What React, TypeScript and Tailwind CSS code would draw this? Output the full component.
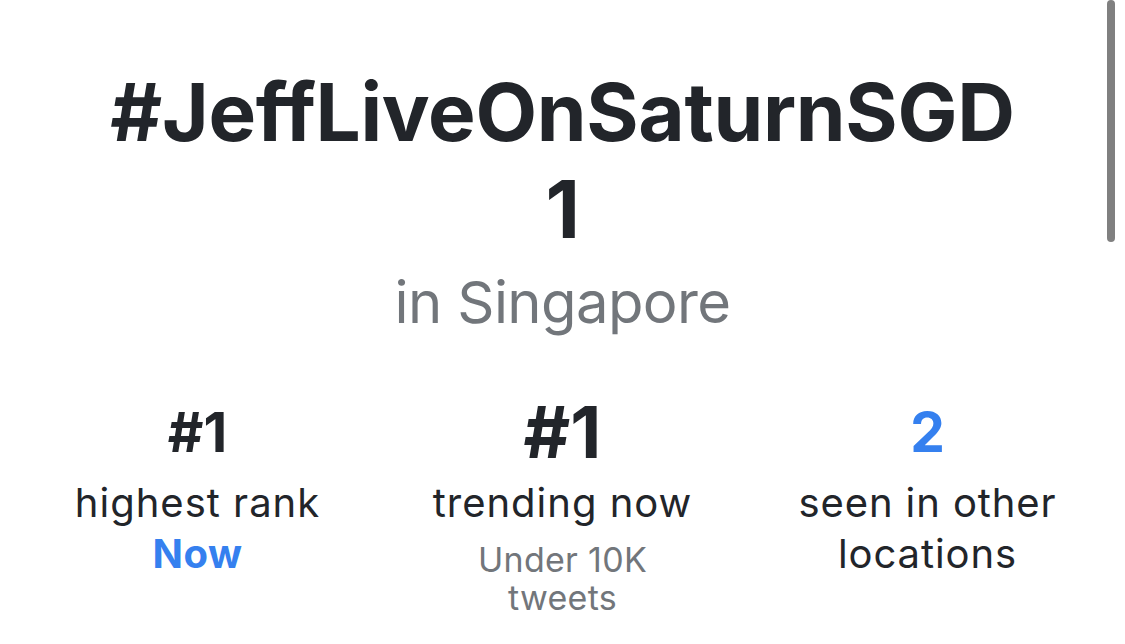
import React from "react";

export default function App() {
  return (
    <div
      className="relative w-[1125px] h-[644px] overflow-hidden bg-white text-[#22252a]"
      style={{ fontFamily: "Inter, 'Noto Sans', 'Liberation Sans', sans-serif" }}
    >
      <div className="px-[15px] pt-[63px] text-center">
        <h1 className="text-[80px] leading-[97px] font-bold tracking-[-0.3px]">
          <div>#JeffLiveOnSaturnSGD</div>
          <div>1</div>
        </h1>
        <div className="mt-[10px] text-[58px] leading-[70px] tracking-[-0.6px] text-[#72767b]">in Singapore</div>
        <div className="mt-[60px] grid grid-cols-3">
          <div className="flex flex-col items-center">
            <div className="text-[55px] leading-[70px] font-bold">#1</div>
            <div className="mt-[10px] text-[40px] leading-[51px] tracking-[1px]">highest rank</div>
            <div className="text-[40px] leading-[51px] font-bold tracking-[0.5px] text-[#3580ef]">Now</div>
          </div>
          <div className="flex flex-col items-center">
            <div className="text-[72px] leading-[70px] font-bold">#1</div>
            <div className="mt-[10px] text-[40px] leading-[51px] tracking-[1px]">trending now</div>
            <div className="mt-[13px] max-w-[200px] text-[34px] leading-[38px] tracking-[0.3px] text-[#72767b]">
              Under 10K tweets
            </div>
          </div>
          <div className="flex flex-col items-center">
            <div className="text-[55px] leading-[70px] font-bold text-[#3580ef]">2</div>
            <div className="mt-[10px] max-w-[300px] text-[40px] leading-[51px] tracking-[0.9px]">seen in other locations</div>
          </div>
        </div>
      </div>
      <div className="absolute right-[10px] top-0 w-[8px] h-[242px] rounded-full bg-[#808080]" />
    </div>
  );
}
